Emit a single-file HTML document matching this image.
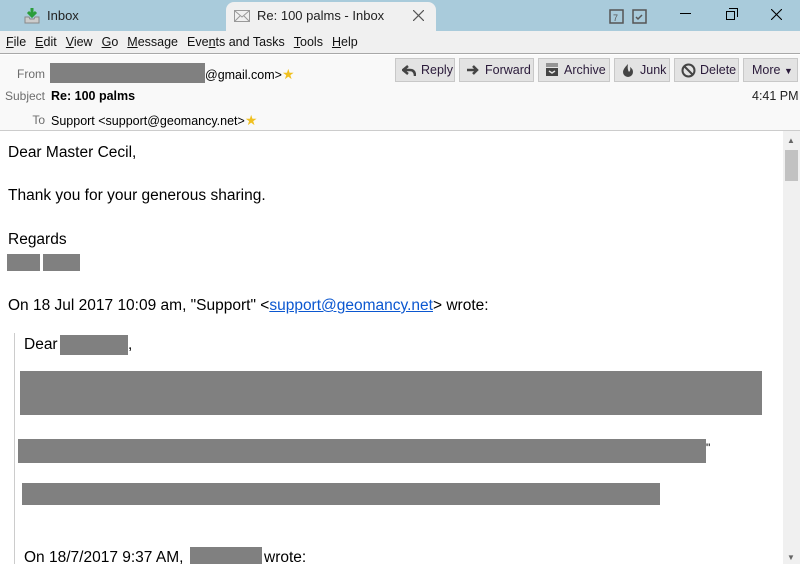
<!DOCTYPE html><html><head><style>
*{margin:0;padding:0;box-sizing:border-box}
body{width:800px;height:564px;overflow:hidden;background:#fff;font-family:"Liberation Sans",sans-serif;position:relative;color:#000}
.a{position:absolute}
.r{position:absolute;background:#808080}
.btn{position:absolute;top:58px;height:24px;background:#e3e3e3;border:1px solid #c8c8c8;font-size:12.5px;color:#2a1a3a;line-height:22px;padding-left:25px}
.btn svg{position:absolute;left:6px;top:4px}
.menu span{margin-right:9px}
.lbl{color:#6d6d6d;font-size:12px;text-align:right;width:45px;left:0}
.bt{font-size:15.5px;position:absolute;white-space:nowrap}
.st{color:#f0c020;font-size:14px}
</style></head><body>
<div class="a" style="left:0;top:0;width:800px;height:31px;background:#a9cbdb"></div>
<div class="a" style="left:226px;top:2px;width:210px;height:30px;background:#f0f0f0;border-radius:8px 8px 0 0"></div>
<svg class="a" style="left:23px;top:6px" width="18" height="18"><path d="M2 11h4l1 2h4l1-2h4v6H2z" fill="#ccc" stroke="#888"/><path d="M9 2v8M5 6l4 4 4-4" stroke="#2a9d3a" stroke-width="3" fill="none"/></svg>
<div class="a" style="left:47px;top:8px;font-size:13px;color:#222">Inbox</div>
<svg class="a" style="left:234px;top:10px" width="16" height="12"><rect x="0.5" y="0.5" width="15" height="11" fill="none" stroke="#999"/><path d="M1 1l7 6 7-6M1 11l5-5M15 11l-5-5" stroke="#999" fill="none"/></svg>
<div class="a" style="left:257px;top:8px;font-size:13px;color:#222">Re: 100 palms - Inbox</div>
<svg class="a" style="left:413px;top:10px" width="11" height="11"><path d="M0 0l11 11M11 0L0 11" stroke="#555" stroke-width="1.2"/></svg>
<svg class="a" style="left:609px;top:8px" width="40" height="16"><rect x="1" y="2" width="13" height="13" fill="none" stroke="#555" stroke-width="1.5"/><text x="4" y="13" font-size="9" fill="#555" font-family="Liberation Sans">7</text><rect x="24" y="2" width="13" height="13" fill="none" stroke="#555" stroke-width="1.5"/><path d="M27 9l2 2 4-4" stroke="#555" fill="none" stroke-width="1.5"/></svg>
<div class="a" style="left:680px;top:13px;width:11px;height:1px;background:#000"></div>
<div class="a" style="left:726px;top:11px;width:9px;height:9px;border:1px solid #000;background:#a9cbdb"></div>
<div class="a" style="left:729px;top:8px;width:9px;height:9px;border-top:1px solid #000;border-right:1px solid #000"></div>
<svg class="a" style="left:771px;top:9px" width="11" height="11"><path d="M0 0l11 11M11 0L0 11" stroke="#000" stroke-width="1.1"/></svg>
<div class="a" style="left:0;top:31px;width:800px;height:23px;background:#f0f0f0;border-bottom:1px solid #a8a8a8"></div>
<div class="a menu" style="left:6px;top:35px;font-size:12.5px;color:#111"><span><u>F</u>ile</span><span><u>E</u>dit</span><span><u>V</u>iew</span><span><u>G</u>o</span><span><u>M</u>essage</span><span>Eve<u>n</u>ts and Tasks</span><span><u>T</u>ools</span><span><u>H</u>elp</span></div>
<div class="a" style="left:0;top:55px;width:800px;height:76px;background:#f9f9f9;border-bottom:1px solid #ccc"></div>
<div class="a lbl" style="top:67px">From</div>
<div class="r" style="left:50px;top:63px;width:155px;height:20px"></div>
<div class="a" style="left:205px;top:66px;font-size:12.5px">@gmail.com&gt;<span class="st">★</span></div>
<div class="a lbl" style="top:89px">Subject</div>
<div class="a" style="left:51px;top:89px;font-size:12.5px;font-weight:bold">Re: 100 palms</div>
<div class="a lbl" style="top:113px">To</div>
<div class="a" style="left:51px;top:112px;font-size:12.5px">Support &lt;support@geomancy.net&gt;<span class="st">★</span></div>
<div class="a" style="left:752px;top:89px;font-size:12.5px;color:#222">4:41 PM</div>
<div class="btn" style="left:395px;width:60px"><svg width="14" height="14"><path d="M6 3L1 7l5 4M1 7h7q5 0 5 6" stroke="#444" stroke-width="2.5" fill="none"/></svg>Reply</div>
<div class="btn" style="left:459px;width:75px"><svg width="14" height="14"><path d="M1 7h10M7 3l4 4-4 4" stroke="#444" stroke-width="2.5" fill="none"/></svg>Forward</div>
<div class="btn" style="left:538px;width:72px"><svg width="14" height="14"><path d="M1 1h12M1 3h12" stroke="#444"/><path d="M1 5h12v8H1z" fill="#444"/><path d="M4 8l3 2 3-2" stroke="#e3e3e3" fill="none" stroke-width="1.5"/></svg>Archive</div>
<div class="btn" style="left:614px;width:56px"><svg width="14" height="14"><path d="M7 1q-5 5-5 8a5 5 0 0 0 10 0q0-3-3-5q1 3-1 5q-2-3-1-8z" fill="#444"/></svg>Junk</div>
<div class="btn" style="left:674px;width:65px"><svg width="15" height="15"><circle cx="7.5" cy="7.5" r="6" stroke="#444" stroke-width="2" fill="none"/><path d="M3.5 3.5l8 8" stroke="#444" stroke-width="2"/></svg>Delete</div>
<div class="btn" style="left:743px;width:55px;padding-left:8px">More <span style="font-size:9px">▼</span></div>
<div class="a" style="left:783px;top:131px;width:17px;height:433px;background:#f0f0f0"></div>
<div class="a" style="left:785px;top:150px;width:13px;height:31px;background:#c2c2c2"></div>
<div class="a" style="left:787px;top:136px;font-size:8px;color:#666">▲</div>
<div class="a" style="left:787px;top:553px;font-size:8px;color:#666">▼</div>
<div class="bt" style="left:8px;top:144px">Dear Master Cecil,</div>
<div class="bt" style="left:8px;top:187px">Thank you for your generous sharing.</div>
<div class="bt" style="left:8px;top:231px">Regards</div>
<div class="r" style="left:7px;top:254px;width:33px;height:17px"></div>
<div class="r" style="left:43px;top:254px;width:37px;height:17px"></div>
<div class="bt" style="left:8px;top:297px">On 18 Jul 2017 10:09 am, "Support" &lt;<span style="color:#0b57d0;text-decoration:underline">support@geomancy.net</span>&gt; wrote:</div>
<div class="a" style="left:14px;top:333px;width:1px;height:231px;background:#ccc"></div>
<div class="bt" style="left:24px;top:336px">Dear</div>
<div class="r" style="left:60px;top:335px;width:68px;height:20px"></div>
<div class="bt" style="left:128px;top:336px">,</div>
<div class="r" style="left:20px;top:371px;width:742px;height:44px"></div>
<div class="r" style="left:18px;top:439px;width:688px;height:24px"></div>
<div class="bt" style="left:706px;top:441px;font-size:12px">"</div>
<div class="r" style="left:22px;top:483px;width:638px;height:22px"></div>
<div class="bt" style="left:24px;top:549px">On 18/7/2017 9:37 AM,</div>
<div class="r" style="left:190px;top:547px;width:72px;height:17px"></div>
<div class="bt" style="left:264px;top:549px">wrote:</div>
</body></html>
